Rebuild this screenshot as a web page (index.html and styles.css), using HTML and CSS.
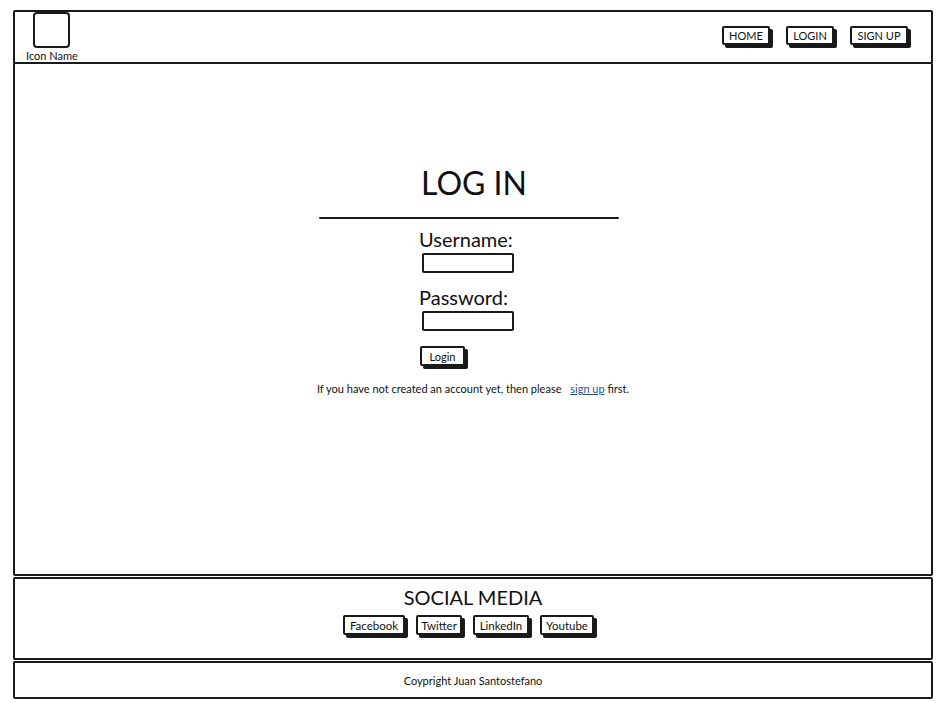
FILE: index.html
```html
<!DOCTYPE html>
<html lang="en">
<head>
  <meta charset="UTF-8" />
  <meta name="viewport" content="width=device-width, initial-scale=1.0"/>
  <title>Log In</title>
  <link rel="stylesheet" href="styles.css">
</head>
<body>

<div class="page">

  <!-- Header -->
  <div class="box header">
    <div class="logo">
      <div class="logo-icon"></div>
      <span class="logo-name">Icon Name</span>
    </div>
    <nav class="nav">
      <a class="btn btn-home" href="#">HOME</a>
      <a class="btn btn-login-nav" href="#">LOGIN</a>
      <a class="btn btn-signup" href="#">SIGN UP</a>
    </nav>
  </div>

  <!-- Login form -->
  <div class="box main">
    <h1 class="title">LOG IN</h1>
    <div class="rule"></div>
    <div class="form">
      <label class="field-label">Username:</label>
      <div class="field"></div>
      <label class="field-label">Password:</label>
      <div class="field"></div>
      <span class="btn btn-login">Login</span>
    </div>
    <p class="note">If you have not created an account yet, then please <a href="#">sign up</a> first.</p>
  </div>

  <!-- Social -->
  <div class="box social">
    <h2 class="social-title">SOCIAL MEDIA</h2>
    <div class="social-links">
      <a class="btn btn-fb" href="#">Facebook</a>
      <a class="btn btn-tw" href="#">Twitter</a>
      <a class="btn btn-li" href="#">LinkedIn</a>
      <a class="btn btn-yt" href="#">Youtube</a>
    </div>
  </div>

  <div class="box footer">Coypright Juan Santostefano</div>

</div>

</body>
</html>
```

FILE: styles.css
```css
body {
  margin: 0;
  background: #fff;
  color: #111;
  font-family: Lato, "Open Sans", sans-serif;
}
.page {
  width: 920px;
  margin: 10px 0 0 13px;
}
.box {
  border: 2px solid #1a1a1a;
  border-radius: 2px;
  box-sizing: border-box;
}
.header {
  height: 54px;
  display: flex;
  justify-content: space-between;
  align-items: flex-start;
  padding: 0 23px 0 11px;
}
.logo {
  display: flex;
  flex-direction: column;
  align-items: center;
}
.logo-icon {
  width: 37px;
  height: 36px;
  border: 2px solid #1a1a1a;
  border-radius: 4px;
  box-sizing: border-box;
}
.logo-name {
  font-size: 11px;
  line-height: 12px;
  margin-top: 2px;
}
.nav {
  display: flex;
  gap: 16px;
  margin-top: 14px;
}
.btn {
  display: inline-block;
  height: 19px;
  line-height: 16px;
  padding: 0;
  border: 2px solid #1a1a1a;
  border-radius: 2px;
  box-sizing: border-box;
  box-shadow: 3px 3px 0 #1a1a1a;
  font-size: 11px;
  color: #111;
  text-decoration: none;
  text-align: center;
  white-space: nowrap;
  background: #fff;
}
.btn-home, .btn-login-nav {
  width: 48px;
}
.btn-signup {
  width: 58px;
}
.main {
  height: 514px;
  margin-top: -2px;
  display: flex;
  flex-direction: column;
  align-items: center;
  padding-top: 100px;
}
.title {
  font-size: 32px;
  font-weight: normal;
  margin: 0;
  line-height: 38px;
  padding-left: 2px;
}
.rule {
  width: 300px;
  height: 2px;
  background: #1a1a1a;
  border-radius: 1px;
  margin: 15px 9px 0 0;
}
.form {
  width: 106px;
  display: flex;
  flex-direction: column;
  align-items: flex-start;
  margin-top: 8px;
}
.field-label {
  font-size: 20px;
  line-height: 24px;
  margin-left: -1px;
}
.field {
  width: 92px;
  height: 20px;
  border: 2px solid #1a1a1a;
  border-radius: 2px;
  box-sizing: border-box;
  margin: 2px 0 12px 2px;
}
.btn-login {
  margin-top: 3px;
  width: 45px;
  height: 20px;
  line-height: 17px;
}
.note {
  font-size: 11px;
  margin: 16px 0 0 0;
}
.note a {
  color: #1f5190;
  margin-left: 6px;
}
.social {
  height: 83px;
  margin-top: 1px;
  display: flex;
  flex-direction: column;
  align-items: center;
  padding-top: 6px;
}
.social-title {
  font-size: 20px;
  font-weight: normal;
  margin: 0;
  line-height: 24px;
}
.social-links {
  display: flex;
  gap: 11px;
  margin: 6px 9px 0 0;
}
.social-links .btn {
  height: 20px;
  line-height: 17px;
  font-size: 11.5px;
}
.btn-fb {
  width: 62px;
}
.btn-tw {
  width: 46px;
}
.btn-li {
  width: 56px;
}
.btn-yt {
  width: 54px;
}
.footer {
  height: 38px;
  margin-top: 1px;
  text-align: center;
  font-size: 11px;
  line-height: 36px;
}
```
